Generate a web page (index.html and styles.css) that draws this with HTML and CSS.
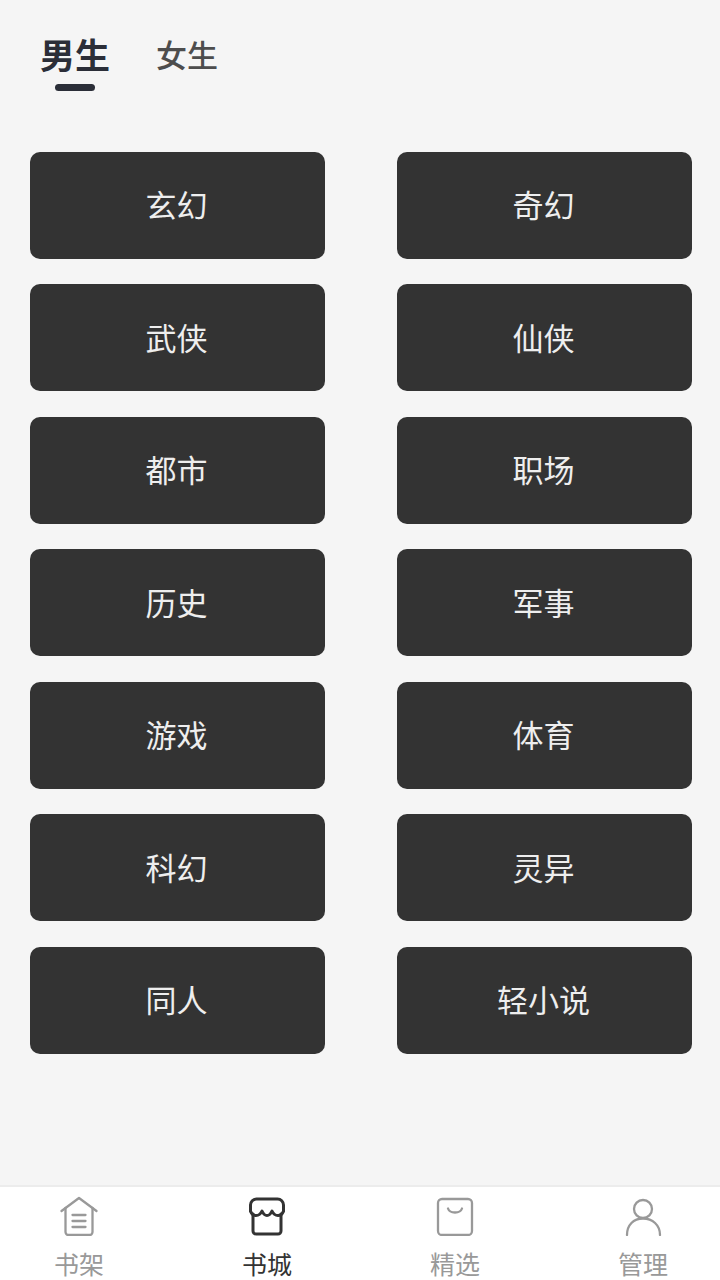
FILE: index.html
```html
<!DOCTYPE html>
<html lang="zh-CN">
<head>
    <meta charset="UTF-8">
    <meta name="viewport" content="width=device-width, initial-scale=1.0">
    <title>书城</title>
    <link rel="stylesheet" href="styles.css">
</head>
<body>
    <main class="page">
        <div class="tabs">
            <div class="tab tab-active">男生</div>
            <div class="tab">女生</div>
        </div>

        <div class="grid">
            <div class="card">玄幻</div>
            <div class="card">奇幻</div>
            <div class="card">武侠</div>
            <div class="card">仙侠</div>
            <div class="card">都市</div>
            <div class="card">职场</div>
            <div class="card">历史</div>
            <div class="card">军事</div>
            <div class="card">游戏</div>
            <div class="card">体育</div>
            <div class="card">科幻</div>
            <div class="card">灵异</div>
            <div class="card">同人</div>
            <div class="card">轻小说</div>
        </div>
    </main>

    <nav class="bottom-nav">
        <div class="nav-item">
            <svg class="nav-icon" viewBox="0 0 40 40">
                <path d="M2.500 15 20 2l17.500 13"/>
                <path d="M6.500 12v24a3 3 0 0 0 3 3h21a3 3 0 0 0 3-3V12"/>
                <path d="M13.500 19h13M13.500 25h13M13.500 31h13"/>
            </svg>
            <span>书架</span>
        </div>
        <div class="nav-item nav-active">
            <svg class="nav-icon" viewBox="0 0 40 40">
                <path d="M3.500 15V9a6 6 0 0 1 6-6h21a6 6 0 0 1 6 6v6"/>
                <path d="M3.500 15Q5 19.500 9 19.500T15 15Q17 19.500 20 19.500T25 15Q27 19.500 31 19.500T36.500 15"/>
                <path d="M6 18v17a3 3 0 0 0 3 3h22a3 3 0 0 0 3-3V18"/>
            </svg>
            <span>书城</span>
        </div>
        <div class="nav-item">
            <svg class="nav-icon" viewBox="0 0 40 40">
                <rect x="3" y="3" width="34" height="36" rx="4"/>
                <path d="M13 12.500c1 3 4 4 7 4s6-1 7-4"/>
            </svg>
            <span>精选</span>
        </div>
        <div class="nav-item">
            <svg class="nav-icon" viewBox="0 0 40 40">
                <circle cx="20" cy="13" r="9"/>
                <path d="M4 39c0-10 6.500-16.500 16-16.500S37 29 37 39"/>
            </svg>
            <span>管理</span>
        </div>
    </nav>
</body>
</html>
```

FILE: styles.css
```css
* {
    box-sizing: border-box;
}

body {
    margin: 0;
    height: 1280px;
    display: flex;
    flex-direction: column;
    overflow: hidden;
    font-family: "Noto Sans CJK SC", "Noto Sans", sans-serif;
    background-color: #f5f5f5;
}

.page {
    flex: 1;
    padding: 0 28px 0 30px;
}

.tabs {
    display: flex;
    align-items: flex-start;
    gap: 46px;
    height: 151.500px;
    padding: 29px 0 0 10px;
}

.tab {
    height: 50px;
    line-height: 50px;
    font-size: 31px;
    font-weight: 500;
    color: #4d4d4d;
}

.tab-active {
    position: relative;
    font-size: 35px;
    font-weight: 700;
    color: #2b2e38;
}

.tab-active::after {
    content: "";
    position: absolute;
    left: 15px;
    right: 15px;
    bottom: -12px;
    height: 7px;
    border-radius: 4px;
    background-color: #2b2e38;
}

.grid {
    display: grid;
    grid-template-columns: 295px 295px;
    grid-auto-rows: 107px;
    column-gap: 72px;
    row-gap: 25.500px;
}

.card {
    display: flex;
    align-items: center;
    justify-content: center;
    padding: 0 2px 3px 0;
    border-radius: 10px;
    background-color: #333333;
    color: #eeeeee;
    font-size: 31px;
}

.bottom-nav {
    display: flex;
    justify-content: space-between;
    height: 95px;
    padding: 0 47px 0 49px;
    border-top: 2px solid #ececec;
    background-color: #ffffff;
}

.nav-item {
    width: 60px;
    display: flex;
    flex-direction: column;
    align-items: center;
    color: #999999;
    font-size: 25px;
    line-height: 32px;
}

.nav-icon {
    width: 40px;
    height: 40px;
    margin-top: 9px;
    margin-bottom: 11px;
    fill: none;
    stroke: #999999;
    stroke-width: 2.300;
    stroke-linecap: round;
    stroke-linejoin: round;
}

.nav-active {
    color: #333333;
}

.nav-active .nav-icon {
    stroke: #333333;
    stroke-width: 3;
}
```
